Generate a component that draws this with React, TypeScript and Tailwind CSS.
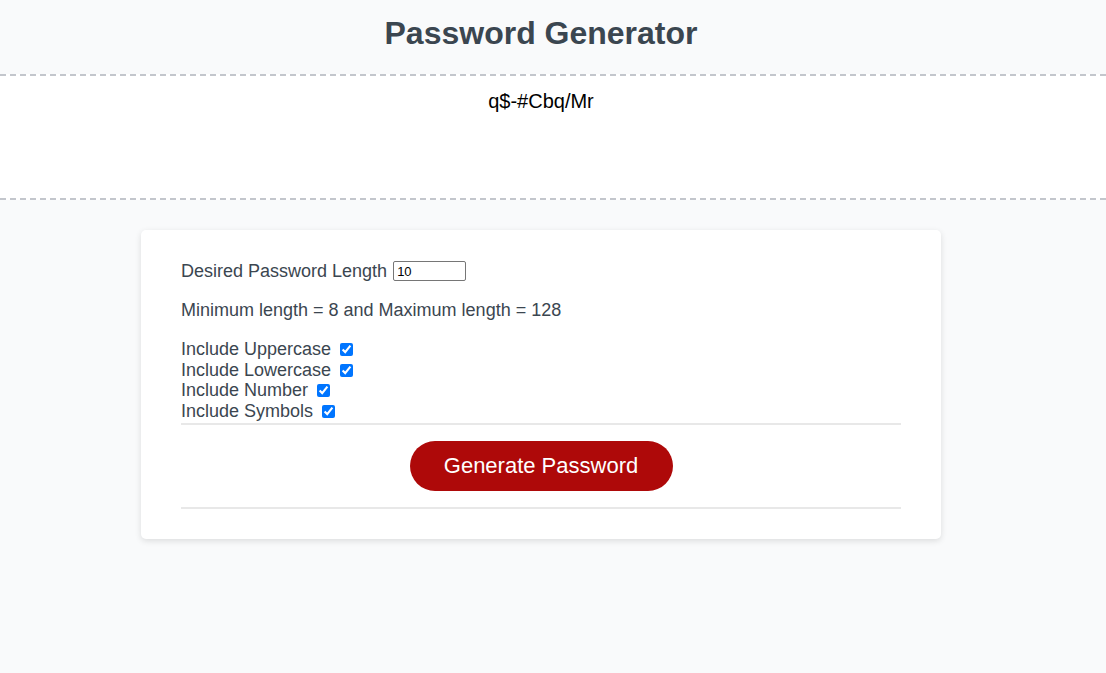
import React from "react";

export default function App() {
  const opts = [
    "Include Uppercase",
    "Include Lowercase",
    "Include Number",
    "Include Symbols",
  ];
  return (
    <div
      className="min-h-screen bg-[#f9fafb] text-[#3b4650]"
      style={{ fontFamily: '"Liberation Sans", Arial, sans-serif' }}
    >
      <header className="w-[1082px] pt-[15px] pb-[22px]">
        <h1 className="text-center text-[32px] font-bold leading-[37px] text-[#3b4650]">
          Password Generator
        </h1>
      </header>
      <div className="bg-white border-y-2 border-dashed border-[#c3c6cc] h-[126px]">
        <div className="w-[1082px] pt-[14px] text-center text-[20px] leading-[23px] text-black">
          q$-#Cbq/Mr
        </div>
      </div>
      <div className="w-[1082px] flex justify-center pt-[30px]">
        <div className="w-[800px] bg-white rounded-[5px] shadow-[0_2px_6px_rgba(0,0,0,0.12)] px-[40px] pt-[30px] pb-[30px] text-[18px] leading-[21px]">
          <div className="flex items-center h-[22px]">
            <span>Desired Password Length</span>
            <input
              type="text"
              defaultValue="10"
              className="ml-[6px] w-[73px] h-[20px] border border-[#767676] rounded-[2px] px-[3px] text-[13px] leading-[16px] text-black bg-white"
            />
          </div>
          <p className="mt-[18px]">Minimum length = 8 and Maximum length = 128</p>
          <div className="mt-[18px] flex flex-col">
            {opts.map((o) => (
              <label key={o} className="flex items-center h-[20.7px]">
                <span>{o}</span>
                <input
                  type="checkbox"
                  defaultChecked
                  className="ml-[9px] w-[13px] h-[13px] accent-[#0075ff]"
                />
              </label>
            ))}
          </div>
          <div className="h-[2px] bg-[#e8e8e8] mt-[1px]" />
          <div className="flex justify-center py-[16px]">
            <button className="w-[263px] h-[50px] rounded-full bg-[#ae0909] text-white text-[22px]">
              Generate Password
            </button>
          </div>
          <div className="h-[2px] bg-[#e8e8e8]" />
        </div>
      </div>
    </div>
  );
}
